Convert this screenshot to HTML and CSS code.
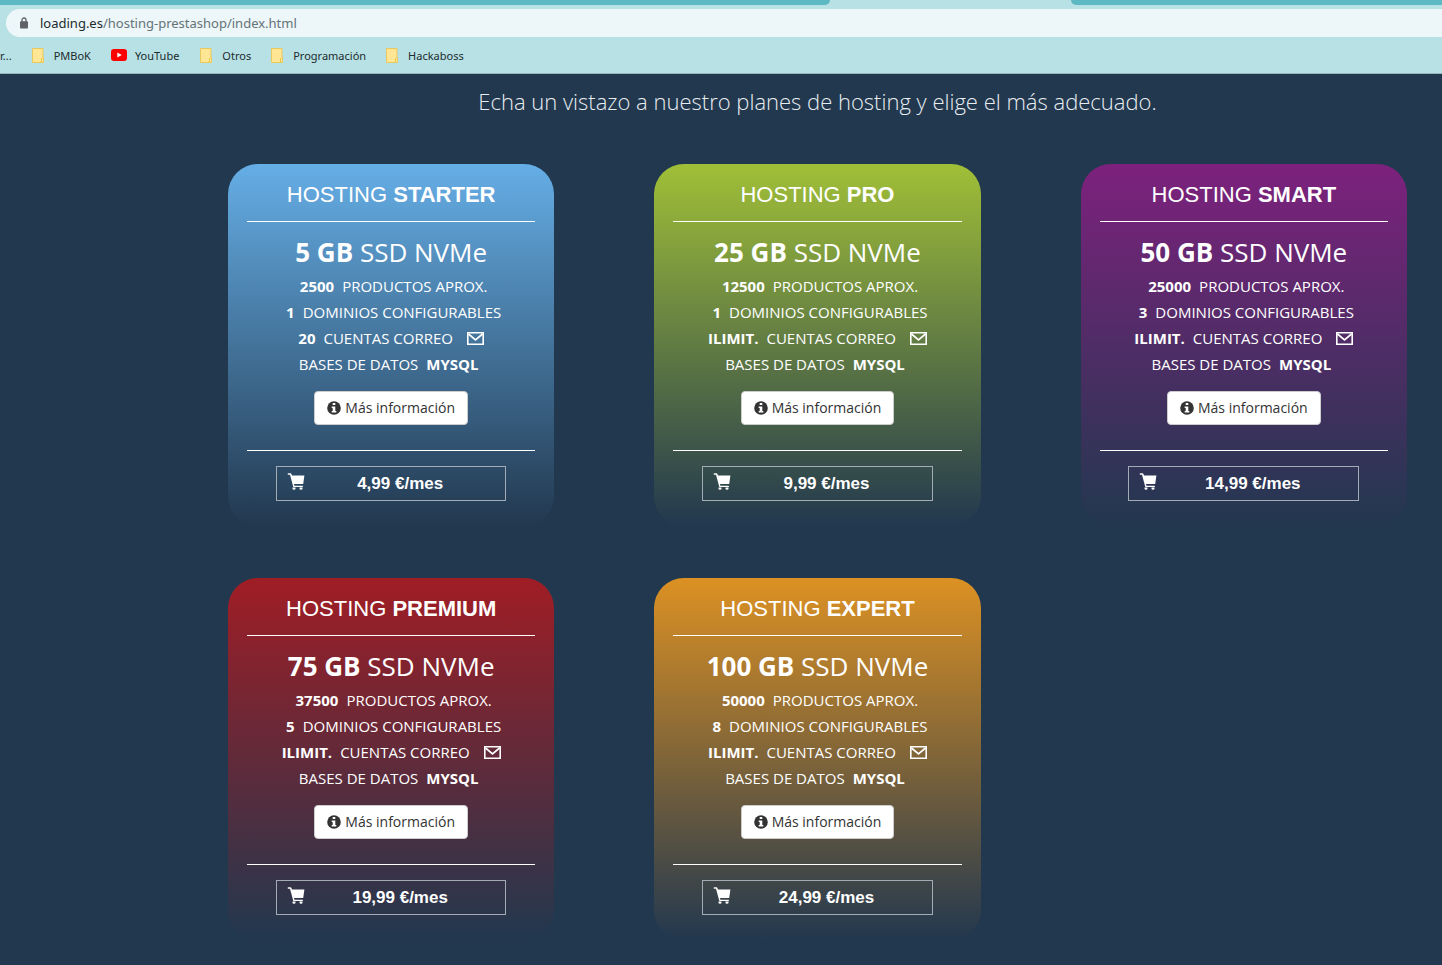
FILE: index.html
```html
<!DOCTYPE html>
<html lang="es">
<head>
<meta charset="utf-8">
<title>Hosting PrestaShop</title>
<link rel="stylesheet" href="styles.css">
</head>
<body>
<svg class="symbols" aria-hidden="true">
  <symbol id="mail" viewBox="0 0 17 13"><path d="M.8.800h15.400v11.400H.8z" fill="none" stroke="currentColor" stroke-width="1.600"/><path d="M1.500 2l7 5.800L15.500 2" fill="none" stroke="currentColor" stroke-width="1.700"/></symbol>
  <symbol id="info" viewBox="0 0 14 14"><circle cx="7" cy="7" r="6.800" fill="currentColor"/><path d="M5.700 2h2.600v2.100H5.700zM4.700 5.500h3.600v4.400h1v1.600H4.700V9.900h1V7h-1z" fill="#fff"/></symbol>
  <symbol id="cart" viewBox="0 0 18 18"><path d="M.6 1Q.6.200 1.400.200h2.100q.6 0 .8.600l.7 1.700H17.400L16.200 11H7l.4 1.700h7.900q.7 0 .7.700t-.7.700H6.300L3 1.800H1.400Q.6 1.800.6 1z" fill="currentColor"/><path d="M5.500 14.500h3v1.300q0 1-1.500 1t-1.500-1zM12.500 14.500h3v1.300q0 1-1.500 1t-1.500-1z" fill="currentColor"/></symbol>
  <symbol id="folder" viewBox="0 0 12 15"><path d="M.5.500h10.500V9l.6.700v4.800H.5z" fill="#ffe694" stroke="#e9c85c"/><path d="M9.500 14v-3l1.500-1.500" fill="none" stroke="#e9c23f"/></symbol>
</svg>
<header class="browser">
  <div class="tabs"><span class="tab-strip tab-left"></span><span class="tab-strip tab-right"></span></div>
  <div class="address">
    <svg class="lock" viewBox="0 0 8 12"><path d="M2 5V3a2 2 0 0 1 4 0v2" fill="none" stroke="#5f6368" stroke-width="1.300"/><rect y="4.300" width="8" height="7.200" rx="1" fill="#5f6368"/></svg>
    <span>loading.es<span class="path">/hosting-prestashop/index.html</span></span>
  </div>
  <nav class="bookmarks">
    <a href="#" class="cut">r...</a>
    <a href="#"><svg class="folder"><use href="#folder"/></svg>PMBoK</a>
    <a href="#" class="video"><svg class="youtube" viewBox="0 0 16 12"><rect width="16" height="12" rx="3" fill="#f00"/><path d="M6.300 3.400v5.200L10.800 6z" fill="#fff"/></svg>YouTube</a>
    <a href="#"><svg class="folder"><use href="#folder"/></svg>Otros</a>
    <a href="#"><svg class="folder"><use href="#folder"/></svg>Programación</a>
    <a href="#"><svg class="folder"><use href="#folder"/></svg>Hackaboss</a>
  </nav>
</header>
<main class="page">
  <p class="intro">Echa un vistazo a nuestro planes de hosting y elige el más adecuado.</p>
  <div class="plans">
    <section class="plan starter">
      <h2>HOSTING <b>STARTER</b></h2>
      <p class="disk"><b>5 GB</b> SSD NVMe</p>
      <ul>
        <li><b>2500</b>PRODUCTOS APROX.</li>
        <li><b>1</b>DOMINIOS CONFIGURABLES</li>
        <li class="accounts"><b>20</b>CUENTAS CORREO<svg class="mail"><use href="#mail"/></svg></li>
        <li class="data">BASES DE DATOS<b>MYSQL</b></li>
      </ul>
      <button class="more" type="button"><svg class="info"><use href="#info"/></svg>Más información</button>
      <div class="buy"><a href="#"><svg class="cart"><use href="#cart"/></svg><span>4,99 €/mes</span></a></div>
    </section>
    <section class="plan pro">
      <h2>HOSTING <b>PRO</b></h2>
      <p class="disk"><b>25 GB</b> SSD NVMe</p>
      <ul>
        <li><b>12500</b>PRODUCTOS APROX.</li>
        <li><b>1</b>DOMINIOS CONFIGURABLES</li>
        <li class="accounts"><b>ILIMIT.</b>CUENTAS CORREO<svg class="mail"><use href="#mail"/></svg></li>
        <li class="data">BASES DE DATOS<b>MYSQL</b></li>
      </ul>
      <button class="more" type="button"><svg class="info"><use href="#info"/></svg>Más información</button>
      <div class="buy"><a href="#"><svg class="cart"><use href="#cart"/></svg><span>9,99 €/mes</span></a></div>
    </section>
    <section class="plan smart">
      <h2>HOSTING <b>SMART</b></h2>
      <p class="disk"><b>50 GB</b> SSD NVMe</p>
      <ul>
        <li><b>25000</b>PRODUCTOS APROX.</li>
        <li><b>3</b>DOMINIOS CONFIGURABLES</li>
        <li class="accounts"><b>ILIMIT.</b>CUENTAS CORREO<svg class="mail"><use href="#mail"/></svg></li>
        <li class="data">BASES DE DATOS<b>MYSQL</b></li>
      </ul>
      <button class="more" type="button"><svg class="info"><use href="#info"/></svg>Más información</button>
      <div class="buy"><a href="#"><svg class="cart"><use href="#cart"/></svg><span>14,99 €/mes</span></a></div>
    </section>
    <section class="plan premium">
      <h2>HOSTING <b>PREMIUM</b></h2>
      <p class="disk"><b>75 GB</b> SSD NVMe</p>
      <ul>
        <li><b>37500</b>PRODUCTOS APROX.</li>
        <li><b>5</b>DOMINIOS CONFIGURABLES</li>
        <li class="accounts"><b>ILIMIT.</b>CUENTAS CORREO<svg class="mail"><use href="#mail"/></svg></li>
        <li class="data">BASES DE DATOS<b>MYSQL</b></li>
      </ul>
      <button class="more" type="button"><svg class="info"><use href="#info"/></svg>Más información</button>
      <div class="buy"><a href="#"><svg class="cart"><use href="#cart"/></svg><span>19,99 €/mes</span></a></div>
    </section>
    <section class="plan expert">
      <h2>HOSTING <b>EXPERT</b></h2>
      <p class="disk"><b>100 GB</b> SSD NVMe</p>
      <ul>
        <li><b>50000</b>PRODUCTOS APROX.</li>
        <li><b>8</b>DOMINIOS CONFIGURABLES</li>
        <li class="accounts"><b>ILIMIT.</b>CUENTAS CORREO<svg class="mail"><use href="#mail"/></svg></li>
        <li class="data">BASES DE DATOS<b>MYSQL</b></li>
      </ul>
      <button class="more" type="button"><svg class="info"><use href="#info"/></svg>Más información</button>
      <div class="buy"><a href="#"><svg class="cart"><use href="#cart"/></svg><span>24,99 €/mes</span></a></div>
    </section>
  </div>
</main>
</body>
</html>
```
FILE: styles.css
```css
* { box-sizing: border-box; }
body { margin: 0; background: #22384f; color: #fff; font-family: "Open Sans", sans-serif; }
a { color: inherit; text-decoration: none; }
.symbols { display: none; }

.browser { background: #b7e1e4; color: #202b2e; font-family: "Noto Sans", sans-serif; border-bottom: 1px solid #98b4bd; }
.tabs { display: flex; justify-content: space-between; height: 5px; }
.tab-strip { background: #5cb8c2; }
.tab-left { flex: 0 0 830px; border-bottom-right-radius: 8px; }
.tab-right { flex: 0 0 371px; border-bottom-left-radius: 8px; }
.address { display: flex; align-items: center; gap: 12px; height: 28px; margin: 4px 0 0 6px; padding-left: 14px; border-radius: 14px 0 0 14px; background: #edf6f8; font-size: 13px; }
.path { color: #647378; }
.lock { width: 8px; height: 12px; }
.bookmarks { display: flex; align-items: center; height: 36px; gap: 20px; font-size: 11px; }
.bookmarks a { display: flex; align-items: center; gap: 10px; }
.bookmarks .video { gap: 8px; margin-right: 1px; }
.folder { width: 12px; height: 15px; }
.youtube { width: 16px; height: 12px; }

.page { padding: 10px 35px 25px 228px; }
.intro { margin: 0; font-size: 22px; font-weight: 300; line-height: 34px; text-align: center; color: #e8edf1; }
.plans { display: grid; grid-template-columns: repeat(3, minmax(0, 1fr)); gap: 52px 100px; margin-top: 46px; }
.plan { display: flex; flex-direction: column; align-items: center; padding: 15px 19px 25px; border-radius: 30px; background: linear-gradient(var(--tint), #22384f); }
.starter { --tint: #65aee6; }
.pro { --tint: #a0bf37; }
.smart { --tint: #7d217d; }
.premium { --tint: #a01d25; }
.expert { --tint: #dc9123; }
.plan h2 { align-self: stretch; margin: 0; padding-bottom: 10px; border-bottom: 1px solid #fff; font: 400 22px/32px "Liberation Sans", Arial, sans-serif; text-align: center; }
.disk { margin: 11px 0 0; font-size: 26px; line-height: 38px; }
.plan ul { margin: 2px 0 0; padding: 0; list-style: none; font-size: 15px; line-height: 26px; }
.plan li { display: flex; justify-content: center; align-items: center; gap: 8px; padding-left: 5px; }
.plan .accounts { padding-left: 0; }
.plan .data { padding: 0 5px 0 0; }
.mail { width: 17px; height: 13px; margin-left: 6px; }
.more { display: flex; align-items: center; gap: 4px; height: 34px; margin-top: 14px; padding: 0 12px 1px; border: 1px solid #ccc; border-radius: 4px; background: #fff; color: #333; font: 400 14px "Open Sans", sans-serif; }
.info { width: 14px; height: 14px; }
.buy { align-self: stretch; margin-top: 25px; padding-top: 15px; border-top: 1px solid #fff; }
.buy a { display: flex; align-items: center; width: 80%; height: 35px; margin: 0 auto; padding: 1px 10px 0; border: 1px solid #a3abb5; font: 700 17px "Liberation Sans", Arial, sans-serif; }
.buy span { flex: 1; text-align: center; }
.cart { width: 18px; height: 18px; margin-bottom: 4px; }
```
